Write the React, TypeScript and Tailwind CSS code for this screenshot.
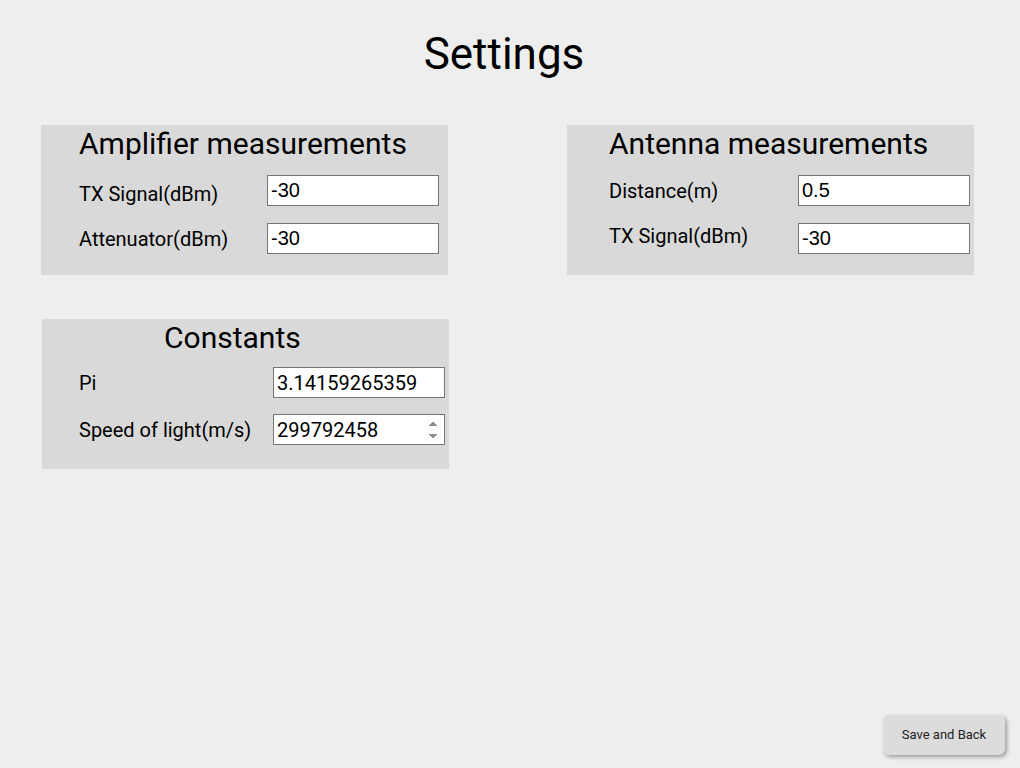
import type { ReactNode } from 'react'

type Field = {
  label: string
  value: string
  number?: boolean
  focus?: boolean
  labelClass?: string
}

type PanelProps = {
  title: string
  titleClass?: string
  className?: string
  fieldsClass: string
  labelWidth: string
  inputFont: string
  fields: Field[]
}

function Panel({ title, titleClass, className, fieldsClass, labelWidth, inputFont, fields }: PanelProps) {
  return (
    <section className={`flex h-[150px] w-[407px] flex-col bg-[#d9d9d9] ${className ?? ''}`}>
      <h2 className={`mt-[1px] text-[30px] leading-[36px] font-normal text-black ${titleClass ?? ''}`}>
        {title}
      </h2>
      <div className={`flex flex-col ${fieldsClass}`}>
        {fields.map((f) => (
          <Row key={f.label} labelWidth={labelWidth}>
            <span className={`text-[20px] leading-[24px] text-black ${f.labelClass ?? ''}`}>{f.label}</span>
            <input
              type={f.number ? 'number' : 'text'}
              defaultValue={f.value}
              autoFocus={f.focus}
              className={`h-[31px] w-[172px] border border-[#767676] bg-white px-[3px] text-[20px] text-black focus:outline-none ${inputFont}`}
            />
          </Row>
        ))}
      </div>
    </section>
  )
}

function Row({ labelWidth, children }: { labelWidth: string; children: ReactNode }) {
  return <div className={`grid items-center ${labelWidth}`}>{children}</div>
}

export default function App() {
  return (
    <div className="flex min-h-screen flex-col bg-[#eeeeee] font-['Roboto',sans-serif]">
      <h1 className="mt-[28px] pr-[12px] text-center text-[44px] leading-[52px] font-normal text-black">
        Settings
      </h1>

      <div className="mt-[45px] flex gap-[119px] pl-[41px]">
        <Panel
          title="Amplifier measurements"
          className="pl-[38px]"
          fieldsClass="mt-[13px] gap-[17px]"
          labelWidth="grid-cols-[188px_172px]"
          inputFont="font-['Liberation_Sans',sans-serif]"
          fields={[
            { label: 'TX Signal(dBm)', value: '-30', labelClass: 'pt-[7px]' },
            { label: 'Attenuator(dBm)', value: '-30' },
          ]}
        />
        <Panel
          title="Antenna measurements"
          className="pl-[42px]"
          fieldsClass="mt-[13px] gap-[17px]"
          labelWidth="grid-cols-[189px_172px]"
          inputFont="font-['Liberation_Sans',sans-serif]"
          fields={[
            { label: 'Distance(m)', value: '0.5' },
            { label: 'TX Signal(dBm)', value: '-30', labelClass: 'pb-[5px]' },
          ]}
        />
      </div>

      <div className="mt-[44px] pl-[42px]">
        <Panel
          title="Constants"
          className="pl-[37px]"
          titleClass="pl-[85px]"
          fieldsClass="mt-[11px] gap-[16px]"
          labelWidth="grid-cols-[194px_172px]"
          inputFont="font-['Roboto',sans-serif]"
          fields={[
            { label: 'Pi', value: '3.14159265359' },
            { label: 'Speed of light(m/s)', value: '299792458', number: true, focus: true, labelClass: 'pr-[1px]' },
          ]}
        />
      </div>

      <button className="mt-auto mr-[15px] mb-[13px] h-[40px] w-[122px] self-end rounded-[6px] bg-[#dcdcdc] text-[13px] text-[#222] shadow-[2px_2px_4px_rgba(0,0,0,0.35)]">
        Save and Back
      </button>
    </div>
  )
}
